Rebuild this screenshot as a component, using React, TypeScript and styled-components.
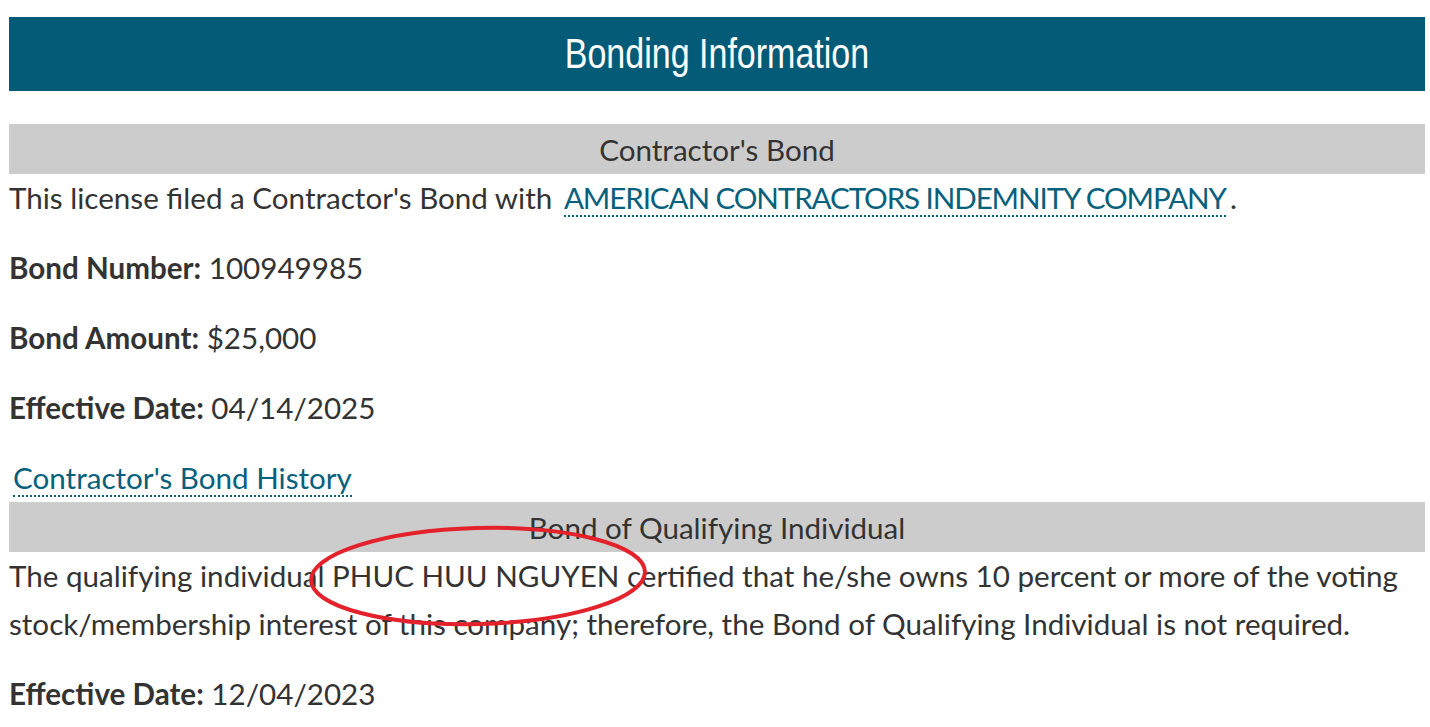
import React from "react";
import styled, { createGlobalStyle } from "styled-components";

const GlobalStyle = createGlobalStyle`
  html, body { margin: 0; padding: 0; background: #ffffff; }
  body { font-family: Lato, "Noto Sans", sans-serif; color: #333333; }
`;

const Page = styled.div`
  position: relative;
  padding: 17px 5px 0 9px;
`;

const Header = styled.h2`
  margin: 0 0 33px;
  height: 74px;
  display: flex;
  align-items: center;
  justify-content: center;
  background: #045b78;
  color: #ffffff;
  font-family: "Liberation Sans Narrow", "Liberation Sans", Arial, sans-serif;
  font-weight: 400;
  font-size: 42px;
`;

const HeaderText = styled.span`
  display: inline-block;
  transform: scaleX(0.81);
`;

const SectionBar = styled.h3`
  margin: 0;
  height: 50px;
  display: flex;
  align-items: center;
  justify-content: center;
  background: #cccccc;
  color: #333333;
  font-weight: 400;
  font-size: 29.6px;
`;

const Para = styled.p<{ $tight?: boolean }>`
  margin: 0 0 ${(p) => (p.$tight ? "0" : "22px")};
  font-size: 29.6px;
  line-height: 48px;
  color: #333333;
`;

const Label = styled.strong`
  font-weight: 700;
`;

const Link = styled.a<{ $caps?: boolean }>`
  margin: 0 4px;
  color: #07607c;
  text-decoration: none;
  border-bottom: 2px dotted #07607c;
  letter-spacing: ${(p) => (p.$caps ? "-1.1px" : "normal")};
`;

const Mark = styled.svg`
  position: absolute;
  left: 0;
  top: 0;
  pointer-events: none;
`;

export default function App() {
  return (
    <>
      <GlobalStyle />
      <Page>
        <Header>
          <HeaderText>Bonding Information</HeaderText>
        </Header>
        <SectionBar>Contractor's Bond</SectionBar>
        <Para>
          This license filed a Contractor's Bond with{" "}
          <Link href="#" $caps>
            AMERICAN CONTRACTORS INDEMNITY COMPANY
          </Link>
          .
        </Para>
        <Para>
          <Label>Bond Number:</Label> 100949985
        </Para>
        <Para>
          <Label>Bond Amount:</Label> $25,000
        </Para>
        <Para>
          <Label>Effective Date:</Label> 04/14/2025
        </Para>
        <Para $tight>
          <Link href="#">Contractor's Bond History</Link>
        </Para>
        <SectionBar>Bond of Qualifying Individual</SectionBar>
        <Para>
          The qualifying individual PHUC HUU NGUYEN certified that he/she owns 10
          percent or more of the voting stock/membership interest of this company;
          therefore, the Bond of Qualifying Individual is not required.
        </Para>
        <Para>
          <Label>Effective Date:</Label> 12/04/2023
        </Para>
        <Mark width="1430" height="727" viewBox="0 0 1430 727">
          <ellipse
            cx="478"
            cy="576"
            rx="167"
            ry="48"
            transform="rotate(-1.5 478 576)"
            fill="none"
            stroke="#e3222b"
            strokeWidth="4"
          />
        </Mark>
      </Page>
    </>
  );
}
